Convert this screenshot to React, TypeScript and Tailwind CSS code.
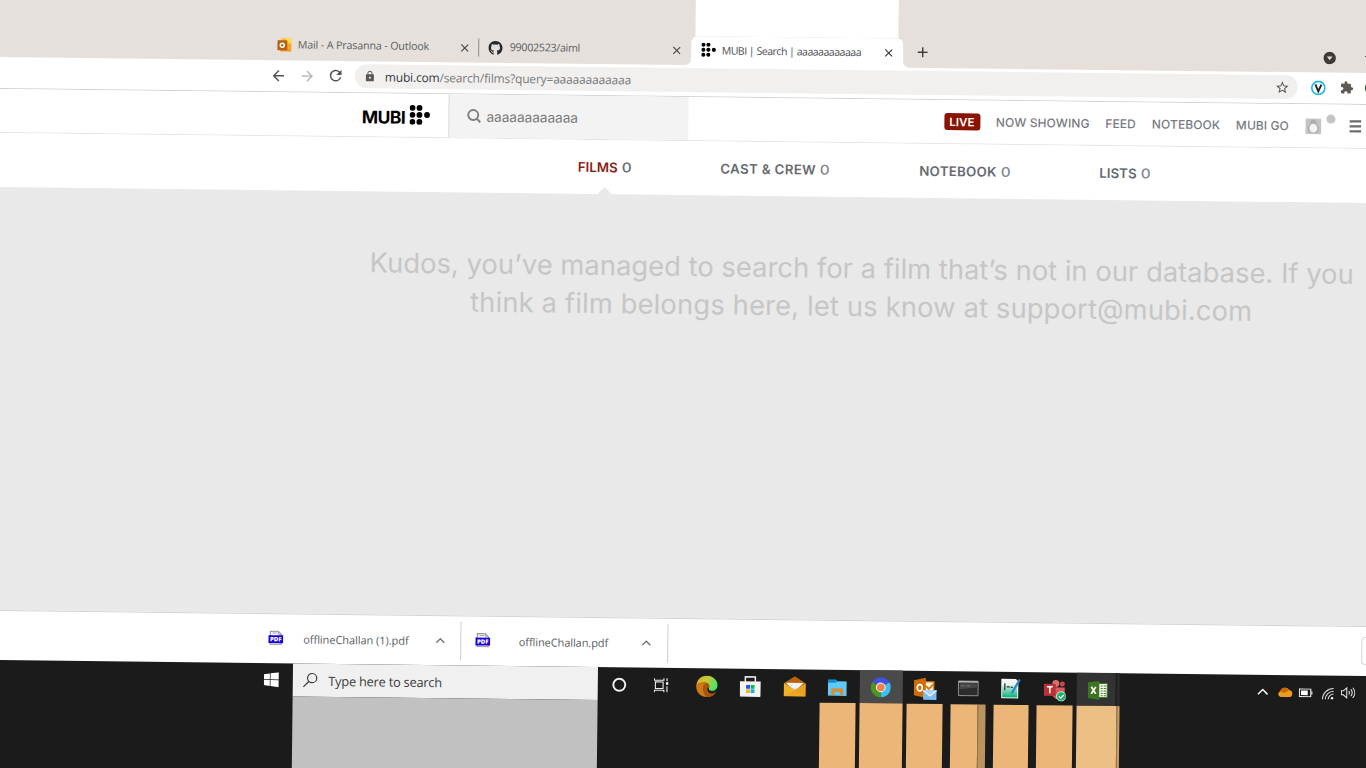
import React from 'react';
import { FaGithub } from 'react-icons/fa';
import { MdArrowBack, MdArrowForward, MdRefresh, MdLock, MdStarBorder, MdExtension, MdClose, MdAdd } from 'react-icons/md';

function Slot({ className, children }: { className: string; children?: React.ReactNode }) {
  return <div className={`flex shrink-0 items-center whitespace-nowrap ${className}`}>{children}</div>;
}

function MubiDots({ className }: { className: string }) {
  return (
    <svg className={className} viewBox="0 0 21 20" fill="#000">
      {[3, 10, 17].map((y) => [3, 10].map((x) => <circle key={`${x}-${y}`} cx={x} cy={y} r="2.9" />))}
      <circle cx="17.6" cy="10" r="2.9" />
    </svg>
  );
}

function OutlookTab() {
  return (
    <svg className="h-[15px] w-[15px]" viewBox="0 0 15 15">
      <path d="M4 1h10v8H4z" fill="#f5c02c" />
      <path d="M9 1h5v4H9z" fill="#ffdd55" />
      <path d="M3 7l11 0v7H3z" fill="#e8921c" />
      <path d="M14 7v7L6 9z" fill="#f0a928" />
      <rect x="0" y="3" width="10" height="10" rx="1" fill="#b9600c" />
      <circle cx="5" cy="8" r="2" fill="none" stroke="#fff" strokeWidth="1.5" />
    </svg>
  );
}

function Pdf() {
  return (
    <svg className="h-[15px] w-[15px]" viewBox="0 0 15 15">
      <path d="M2 5V1h8l3 3v10H2z" fill="#fff" stroke="#8b8b93" strokeWidth="1" />
      <path d="M4 2.8h5M10 1v3h3" stroke="#9a9aa2" strokeWidth="0.9" fill="none" />
      <rect x="0" y="5" width="15" height="7.8" fill="#1a00d8" />
      <text x="7.5" y="11.1" textAnchor="middle" fontSize="6" fontWeight="800" fontFamily="Open Sans, sans-serif" fill="#fff" textLength="11.5">PDF</text>
    </svg>
  );
}

function Chevron({ color, className }: { color: string; className: string }) {
  return (
    <svg className={className} viewBox="0 0 12 8">
      <path d="M1.2 6.5L6 1.700l4.800 4.800" fill="none" stroke={color} strokeWidth="1.6" />
    </svg>
  );
}

function TabStrip() {
  return (
    <div className="bg-[#e5e0dc]">
      <div className="flex h-[48px]">
        <div className="ml-[696px] w-[203px] bg-white" />
      </div>
      <div className="flex h-[28.5px] bg-linear-to-b from-[#e5e0dc] from-50% to-white to-50% text-[10.7px] text-[#5b5e63]">
        <div className="flex h-full w-[691.5px] shrink-0 items-center rounded-br-[6px] bg-[#e5e0dc] pb-[1px]">
          <Slot className="ml-[277.5px] w-[21px]"><OutlookTab /></Slot>
          <Slot className="w-[162px] tracking-[-0.14px]">Mail - A Prasanna - Outlook</Slot>
          <Slot className="w-[18px] pt-[1px]"><MdClose className="-ml-[2px] size-[13px] text-[#404245]" /></Slot>
          <Slot className="h-[18px] w-[10.5px]"><div className="h-full w-px bg-[#8f8d8b]" /></Slot>
          <Slot className="w-[21.5px]"><FaGithub className="size-[14.5px] text-[#24292f]" /></Slot>
          <Slot className="w-[162px] tracking-[-0.29px]">99002523/aiml</Slot>
          <Slot className="w-[16px] pt-[1px]"><MdClose className="-ml-[2px] size-[13px] text-[#404245]" /></Slot>
        </div>
        <div className="h-full w-[212px] shrink-0 bg-linear-to-b from-[#e5e0dc] from-50% to-white to-50%">
          <div className="flex h-full items-center rounded-t-[6px] bg-white pb-[1px] text-[10.5px] text-[#4a4d52]">
            <Slot className="ml-[10px] w-[21px]"><MubiDots className="h-[15px] w-[15px]" /></Slot>
            <Slot className="w-[162px] tracking-[-0.47px]">MUBI | Search | aaaaaaaaaaaa</Slot>
            <Slot className="pt-[1px]"><MdClose className="-ml-[1.500px] size-[13px] text-[#303235]" /></Slot>
          </div>
        </div>
        <div className="flex h-full grow items-center rounded-bl-[6px] bg-[#e5e0dc] pb-[1px]">
          <Slot className="ml-[11.500px] w-[408.5px]"><MdAdd className="size-[17px] text-[#3c3e41]" /></Slot>
          <Slot className="w-[42px] pt-[1px]">
            <svg className="size-[13px]" viewBox="0 0 13 13"><circle cx="6.5" cy="6.5" r="6.2" fill="#3c3b3a" /><path d="M3.7 5h5.6L6.5 8.6z" fill="#e5e0dc" /></svg>
          </Slot>
          <Slot className="mb-[3px] h-px w-[10px] bg-[#222]" />
        </div>
      </div>
    </div>
  );
}

function Toolbar() {
  return (
    <div className="-mt-px flex h-[33px] items-center border-b border-[#d4d2d0] bg-white pt-px">
      <Slot className="ml-[271px] w-[28.5px]"><MdArrowBack className="size-[17px] text-[#55514e]" /></Slot>
      <Slot className="w-[28.5px]"><MdArrowForward className="size-[17px] text-[#b9b7b5]" /></Slot>
      <Slot className="w-[28px]"><MdRefresh className="size-[17.5px] text-[#55514e]" /></Slot>
      <div className="flex h-[24px] w-[943px] shrink-0 items-center rounded-full bg-[#f1f0ee]">
        <Slot className="ml-[9px] w-[21px]"><MdLock className="size-[12px] text-[#5a5653]" /></Slot>
        <Slot className="w-[890px] pt-[1.500px] text-[12px] tracking-[-0.18px] text-[#77797c]"><span className="text-[#33363a]">mubi.com</span>/search/films?query=aaaaaaaaaaaa</Slot>
        <Slot className=""><MdStarBorder className="size-[15px] text-[#55514e]" /></Slot>
      </div>
      <Slot className="ml-[13px] w-[28.5px]">
        <svg className="size-[15px]" viewBox="0 0 14 14"><circle cx="7" cy="7" r="6.1" fill="#fff" stroke="#17b5ee" strokeWidth="1.5" /><path d="M4.2 3.8L7 10.2l2.8-6.4" fill="none" stroke="#222" strokeWidth="1.8" /></svg>
      </Slot>
      <Slot className="w-[25px]"><MdExtension className="size-[14px] text-[#5f5a56]" /></Slot>
      <Slot className="size-[14px] rounded-full bg-[#17643a]" />
    </div>
  );
}

function SiteHeader() {
  return (
    <div className="flex h-[44px] items-center border-b border-[#e4e4e4] bg-white font-['Inter',sans-serif]">
      <Slot className="ml-[363.500px] w-[47px] pt-[5.500px] text-[17.5px] font-bold tracking-[-0.6px] text-black">MUBI</Slot>
      <Slot className="w-[39px]"><MubiDots className="mb-[1px] h-[20px] w-[21px]" /></Slot>
      <div className="flex h-full w-[240px] shrink-0 items-center border-l border-[#dcdcdc] bg-[#f3f3f3]">
        <Slot className="ml-[17.500px] w-[20px]">
          <svg className="size-[15px]" viewBox="0 0 15 15" fill="none" stroke="#7d7d7d" strokeWidth="1.900"><circle cx="6.800" cy="6.500" r="5" /><path d="M10.300 10l3.600 3.600" /></svg>
        </Slot>
        <Slot className="pt-[4px] text-[13.6px] text-[#777]">aaaaaaaaaaaa</Slot>
      </div>
      <div className="flex h-full items-center pt-[1px] text-[12px] font-medium text-[#777b80]">
        <Slot className="ml-[256px] h-[17px] w-[36px] justify-center rounded-[3px] bg-[#8a1404] pt-[2px] text-[11.5px] font-semibold text-white">LIVE</Slot>
        <Slot className="ml-[16px] w-[109.5px] pt-[1px] tracking-[0.1px]">NOW SHOWING</Slot>
        <Slot className="w-[46.5px] pt-[1px]">FEED</Slot>
        <Slot className="w-[84px] pt-[1px] tracking-[0.1px]">NOTEBOOK</Slot>
        <Slot className="w-[69px] pt-[1px] tracking-[0.1px]">MUBI GO</Slot>
        <Slot className="w-[21.5px]">
          <svg className="size-[16px]" viewBox="0 0 16 16"><rect width="16" height="16" rx="1.5" fill="#c4c4c4" /><path d="M8 1.5c3 0 3 2.5 3.2 4 1.8 2 2.8 4 2 6.500-.8 2-2.700 2.800-5.200 2.800s-4.400-.8-5.200-2.800c-.8-2.500.2-4.500 2-6.500C5 4 5 1.500 8 1.500z" fill="#adadad" /><ellipse cx="8" cy="9.800" rx="4" ry="4.300" fill="#f4f4f4" /></svg>
        </Slot>
        <Slot className="mb-[15px] w-[22.5px]"><div className="size-[9px] rounded-full bg-[#c4c4c4]" /></Slot>
        <svg className="h-[13px] w-[12px] shrink-0" viewBox="0 0 12 13"><path d="M0 1.500h12M0 6.500h12M0 11.500h12" stroke="#6b6b6b" strokeWidth="2.200" /></svg>
      </div>
    </div>
  );
}

function Zero({ className }: { className: string }) {
  return <span className={`ml-[4px] inline-block origin-left scale-x-[1.15] font-medium ${className}`}>0</span>;
}

function ResultTabs() {
  return (
    <div className="flex h-[54.5px] items-center bg-white font-['Inter',sans-serif] text-[13.3px] font-semibold text-[#666a6f]">
      <Slot className="relative ml-[580px] h-full w-[142.500px] pt-px text-[#8a1f14]">
        FILMS<Zero className="text-[#666a6f]" />
        <svg className="absolute bottom-0 left-[20px] h-[7px] w-[14px]" viewBox="0 0 14 7"><path d="M0 7L7 0l7 7z" fill="#e9e9e9" /></svg>
      </Slot>
      <Slot className="w-[199px] pt-px tracking-[0.330px]">CAST &amp; CREW<Zero className="text-[#85888c]" /></Slot>
      <Slot className="w-[180px] pt-px tracking-[0.250px]">NOTEBOOK<Zero className="text-[#85888c]" /></Slot>
      <Slot className="pt-px">LISTS<Zero className="text-[#85888c]" /></Slot>
    </div>
  );
}

function Downloads() {
  return (
    <div className="flex h-[49.5px] items-center border-t border-[#d6d4d2] bg-white text-[11px] text-[#5b5e63]">
      <Slot className="ml-[276px] w-[35px] pb-[1px]"><Pdf /></Slot>
      <Slot className="w-[131.500px] tracking-[-0.050px]">offlineChallan (1).pdf</Slot>
      <Slot className="w-[25.500px] pt-[1px]"><Chevron color="#77716c" className="h-[7px] w-[10px]" /></Slot>
      <Slot className="w-[14.500px] self-stretch py-[5px]"><div className="h-full w-px bg-[#cfcdcb]" /></Slot>
      <Slot className="w-[44px] pb-[1px]"><Pdf /></Slot>
      <Slot className="w-[122px] tracking-[-0.080px]">offlineChallan.pdf</Slot>
      <Slot className="w-[26px] pt-[1px]"><Chevron color="#77716c" className="h-[7px] w-[10px]" /></Slot>
      <Slot className="w-[694.500px] self-stretch py-[5px]"><div className="h-full w-px bg-[#cfcdcb]" /></Slot>
      <div className="h-[28px] w-[60px] shrink-0 rounded-[4px] border border-[#d8d6d4]" />
    </div>
  );
}

function Taskbar() {
  return (
    <div className="flex h-[33px]">
      <Slot className="ml-[272px] w-[29px] pt-px">
        <svg className="size-[15px]" viewBox="0 0 15 15" fill="#fff"><path d="M0 2l6-.8v5.900H0zM6.700 1L15 0v7.100H6.700zM0 7.900h6v5.800l-6-.8zM6.700 7.900H15V15l-8.300-1.100z" /></svg>
      </Slot>
      <div className="flex w-[305px] shrink-0 items-center bg-[#f0f0f0]">
        <Slot className="ml-[10px] w-[25.500px]">
          <svg className="size-[15px]" viewBox="0 0 15 15" fill="none" stroke="#3a3a3a" strokeWidth="1.200"><circle cx="9.300" cy="5.400" r="4.600" /><path d="M6 8.800L.6 14.300" /></svg>
        </Slot>
        <Slot className="pt-[2px] text-[12.800px] tracking-[-0.220px] text-[#3c3c3c]">Type here to search</Slot>
      </div>
      <Slot className="ml-[13.500px] w-[42.500px] pt-[2px]">
        <svg className="size-[15px]" viewBox="0 0 15 15"><circle cx="7.500" cy="7.500" r="6" fill="none" stroke="#f2f2f2" strokeWidth="1.900" /></svg>
      </Slot>
      <Slot className="w-[42px] pt-[2px]">
        <svg className="size-[15px]" viewBox="0 0 15 15" fill="none" stroke="#eee" strokeWidth="1.100"><path d="M.6.500v2h9.500v-2M.6 14.500v-2h9.500v2M1.600 4.200h7.700v6.500H1.600zM13.200.500v2.800M13.200 8.500v6" /><path d="M12.200 4.500h2.300v2.300h-2.300z" fill="#fff" stroke="none" /></svg>
      </Slot>
      <Slot className="w-[44px] pt-[3px]">
        <svg className="size-[22px]" viewBox="0 0 22 22">
          <defs><linearGradient id="edge" x1="0" y1="0" x2="1" y2="0.500"><stop offset="0" stopColor="#f0a41d" /><stop offset="0.500" stopColor="#c4cc35" /><stop offset="1" stopColor="#4fe06a" /></linearGradient></defs>
          <path d="M.5 10C1.500 3.500 6 .5 11 .5c6 0 10.800 4.500 10.800 9.200 0 3.500-2.500 5.600-5.500 5.600-2.500 0-3.800-1-3.300-2.200 1-1.800.8-5.800-4.500-5.800-3.500 0-6.500 1-8 2.700z" fill="url(#edge)" />
          <path d="M.4 11C.4 8.500 4 7 8 7c4 0 6 2.500 5.500 5l-2.500 1c0 3.500 3.500 6 9 4-2 3.200-5.500 4.700-9 4.700C5 21.700.4 17 .4 11z" fill="#cf7a17" />
          <path d="M7 12.500C7 10 8.500 8 11 7.800c2.300 1 3 3.200 2 5.200-.8 2 3 4 7.200 2.500.5 0 .6.500.3 1-2.300 3.800-6 5.200-9.500 5.200C8.500 20 7 16 7 12.500z" fill="#a8560f" />
          <path d="M13 13.100c-.8 2 3 4 7.200 2.500l.5.700c-1.200 1-3 1.900-5 1.900-2.800 0-4.400-2.500-4-5.200.2-1 .8-1 1.300.1z" fill="#1b1b1b" />
        </svg>
      </Slot>
      <Slot className="w-[43.500px] pt-[2px]">
        <svg className="size-[21px]" viewBox="0 0 21 21"><path d="M5.500 6V1h10v5" fill="none" stroke="#eee" strokeWidth="1.500" /><path d="M0 5.500h21V20a1 1 0 01-1 1H1a1 1 0 01-1-1z" fill="#f3f3f3" /><path d="M6.300 9.200h3.900v3.700H6.300z" fill="#1d55f0" /><path d="M10.900 9.200h3.800v3.700h-3.800z" fill="#14b35a" /><path d="M6.300 13.500h3.900v3.700H6.300z" fill="#f5b91d" /><path d="M10.900 13.500h3.800v3.700h-3.800z" fill="#20a9ef" /></svg>
      </Slot>
      <Slot className="w-[44px] pt-[2px]">
        <svg className="h-[20px] w-[22px]" viewBox="0 0 22 20"><path d="M0 7l11-7 11 7v13H0z" fill="#b9640d" /><path d="M2 6.500h18L12 14H10z" fill="#f2f2f2" /><path d="M0 7l22 13H0z" fill="#f3b52b" /><path d="M22 7v13H0z" fill="#e8a224" /><path d="M0 7l11 6.500L0 20z" fill="#f0b22d" /><path d="M11 13.500L22 20H0z" fill="#eda826" /></svg>
      </Slot>
      <Slot className="w-[32.500px] pt-[2px]">
        <svg className="h-[17px] w-[19px]" viewBox="0 0 19 17"><path d="M0 1h8l1.500 1.500H19V17H0z" fill="#5fc9f8" /><path d="M0 1h8l1.500 1.500L8 4H0z" fill="#0d8fd3" /><path d="M3.500 9.500h12V16.500h-3.300v-3.500H6.800v3.500H3.500z" fill="#d98d35" /></svg>
      </Slot>
      <Slot className="h-full w-[42.500px] justify-center bg-[#4a4a4a] pt-[2px]">
        <svg className="size-[20px]" viewBox="0 0 20 20"><path d="M10 10L1.340 5A10 10 0 0118.660 5z" fill="#4052e0" /><path d="M10 10L18.660 5A10 10 0 0110 20z" fill="#3cc0f5" /><path d="M10 10V20A10 10 0 011.340 5z" fill="#4e9620" /><circle cx="10" cy="10" r="4.900" fill="#f4f4f4" /><circle cx="10" cy="10" r="3.900" fill="#f3814b" /></svg>
      </Slot>
      <Slot className="ml-[11.500px] w-[44px] pt-[4px]">
        <svg className="size-[23px]" viewBox="0 0 23 23"><path d="M10 4h10v12H10z" fill="#f8f1e4" stroke="#d9780a" strokeWidth="1.300" /><path d="M12 8l3 3 5-5" stroke="#d9780a" strokeWidth="1.800" fill="none" /><path d="M0 2.500L12 0v20L0 17.500z" fill="#cf6c04" /><ellipse cx="6" cy="10" rx="2.500" ry="3.200" fill="none" stroke="#fff" strokeWidth="1.700" /><path d="M9.500 12.500H23V22H9.500z" fill="#7dbcf0" /><path d="M9.500 12.500l6.800 5.500 6.700-5.500" fill="#a9d5f7" stroke="#f2f8fd" strokeWidth="1.200" /></svg>
      </Slot>
      <Slot className="w-[43px] pt-[1px]">
        <svg className="h-[16px] w-[21px]" viewBox="0 0 21 16"><rect x=".6" y=".6" width="19.800" height="14.800" rx="1" fill="#2c2c2c" stroke="#8a8a8a" strokeWidth="1.200" /><path d="M1 1.500h19" stroke="#bbb" strokeWidth="1.400" /><path d="M2 3h17v4L2 9z" fill="#484848" /><path d="M3 5.500h3M7 5.500h1M9 5.500h3" stroke="#888" strokeWidth="0.800" /></svg>
      </Slot>
      <Slot className="w-[43px] pt-[1px]">
        <svg className="h-[21px] w-[20px]" viewBox="0 0 20 21">
          <defs><linearGradient id="sheet" x1="0" y1="0" x2="0" y2="1"><stop offset="0" stopColor="#d5f2e5" /><stop offset="1" stopColor="#0cb07a" /></linearGradient></defs>
          <path d="M.5 1H15l2.500 2.500V20.500H.5z" fill="#f5f5f5" /><path d="M1.500 7h15v12.500h-15z" fill="url(#sheet)" /><path d="M4 5.500v7M6 9h3M10 9.500h2" stroke="#333" strokeWidth="1.300" /><path d="M19 1.500l-8 14" stroke="#2889c9" strokeWidth="2.200" />
        </svg>
      </Slot>
      <Slot className="w-[33px] pt-[3px]">
        <svg className="size-[22px]" viewBox="0 0 22 22"><circle cx="12" cy="4" r="3.500" fill="#e26a6a" /><circle cx="18.500" cy="4.500" r="2.500" fill="#c84a4a" /><path d="M8 8h13v7c0 4-3 5-6 5s-6-2-7-6z" fill="#d65b5b" /><path d="M0 4.500h12v12H0z" fill="#b83338" /><path d="M3.300 7.500h5.600M6.100 7.500v6.500" stroke="#fff" strokeWidth="1.500" /><circle cx="17.500" cy="17" r="4.700" fill="#1ab36b" stroke="#eafff3" strokeWidth="0.800" /><path d="M15.300 17l1.700 1.700 3-3.200" fill="none" stroke="#fff" strokeWidth="1.200" /></svg>
      </Slot>
      <Slot className="h-full w-[39px] justify-center bg-[#333] pl-[3px] pt-[2px]">
        <svg className="h-[19px] w-[20px]" viewBox="0 0 20 19"><path d="M10 2.500h9.500v14H10z" fill="#f3f5ee" stroke="#3d7a22" strokeWidth="1" /><path d="M13 5h2M16 5h2.500M13 7.500h2M16 7.500h2.500M13 10h2M16 10h2.500M13 12.500h2M16 12.500h2.500M13 14.800h2M16 14.800h2.500" stroke="#4b8430" strokeWidth="1" /><path d="M0 1.500L11.500 0v19L0 17.200z" fill="#3d7420" /><path d="M3.500 6l4.500 7M8 6l-4.500 7" stroke="#fff" strokeWidth="1.700" /></svg>
      </Slot>
      <div className="mr-[137px] w-[3.500px] shrink-0 border-l border-[#1b1b1b] bg-[#2a2a2a]" />
      <Slot className="w-[21px] pt-[1px]"><Chevron color="#f2f2f2" className="h-[8px] w-[12px]" /></Slot>
      <Slot className="w-[21.500px] pt-[1px]">
        <svg className="h-[10px] w-[15px]" viewBox="0 0 15 10"><path d="M3 10a3 3 0 01-.5-5.800A5 5 0 0111.500 3 3.600 3.600 0 0112 10z" fill="#ee9a1f" /><path d="M2.500 4.200A5 5 0 0111.500 3L7 6z" fill="#c96a06" /></svg>
      </Slot>
      <Slot className="w-[23px] pt-[2px]">
        <svg className="h-[9px] w-[14px]" viewBox="0 0 14 9"><rect x=".6" y=".6" width="11.400" height="7.800" fill="none" stroke="#eee" strokeWidth="1.100" /><path d="M2.200 2.200H9v4.600H2.200z" fill="#fff" /><path d="M12.500 3h1.300v3h-1.300z" fill="#eee" /></svg>
      </Slot>
      <Slot className="w-[18.500px] pt-[3px]">
        <svg className="size-[12px]" viewBox="0 0 12 12" fill="none" stroke="#ddd" strokeWidth="1.100"><path d="M.8 12A11 11 0 0112 .8M3.600 12A8.400 8.400 0 0112 3.600M6.400 12A5.600 5.600 0 0112 6.400" /><circle cx="10.400" cy="10.600" r="1.300" fill="#fff" stroke="none" /></svg>
      </Slot>
      <Slot className="pt-[2px]">
        <svg className="h-[12px] w-[15px]" viewBox="0 0 15 12" fill="none" stroke="#eee" strokeWidth="1"><path d="M.6 4h2L6 1v10L2.600 8h-2zM8 4.300c.8 1 .8 2.400 0 3.400M10 2.600c1.700 2 1.700 4.800 0 6.800M12 .9c2.600 3 2.600 7.200 0 10.200" /></svg>
      </Slot>
    </div>
  );
}

function TaskbarLower() {
  return (
    <div className="flex h-[120px]">
      <div className="ml-[301px] w-[305px] shrink-0 bg-[#c1c1c1]" />
      <div className="ml-[222px] w-[36px] shrink-0 bg-[#ebb677]" />
      <div className="ml-[4px] w-[42.500px] shrink-0 bg-[#ebb677]" />
      <div className="ml-[4.500px] w-[35.500px] shrink-0 bg-[#ebb677]" />
      <div className="ml-[8px] w-[27.500px] shrink-0 bg-[#ebb677]" />
      <div className="w-[8px] shrink-0 border-l border-[#95764c] bg-[#ba945f]" />
      <div className="ml-[7.500px] w-[35.500px] shrink-0 bg-[#ebb677]" />
      <div className="ml-[8px] w-[35.500px] shrink-0 bg-[#ebb677]" />
      <div className="ml-[4.500px] w-[39.500px] shrink-0 bg-[#ecbf84]" />
      <div className="w-[3px] shrink-0 border-l border-[#8d744f] bg-[#c89f68]" />
    </div>
  );
}

export default function App() {
  return (
    <div className="h-[768px] w-[1366px] overflow-hidden bg-[#1b1b1b]">
      <div className="-mt-[20px] w-[1420px] origin-top-left rotate-[0.67deg] bg-white font-['Open_Sans','Noto_Sans',sans-serif] leading-none">
        <TabStrip />
        <Toolbar />
        <SiteHeader />
        <ResultTabs />
        <div className="h-[423px] bg-[#e9e9e9] pt-[52px]">
          <p className="ml-[365px] w-[1000px] whitespace-nowrap text-center font-['Inter',sans-serif] text-[27.400px] leading-[38px] text-[#c6c6c6]">
            Kudos, you’ve managed to search for a film that’s not in our database. If you<br />
            <span className="tracking-[0.130px]">think a film belongs here, let us know at support@mubi.com</span>
          </p>
        </div>
        <Downloads />
        <div className="bg-[#1b1b1b]">
          <Taskbar />
          <TaskbarLower />
        </div>
      </div>
    </div>
  );
}
